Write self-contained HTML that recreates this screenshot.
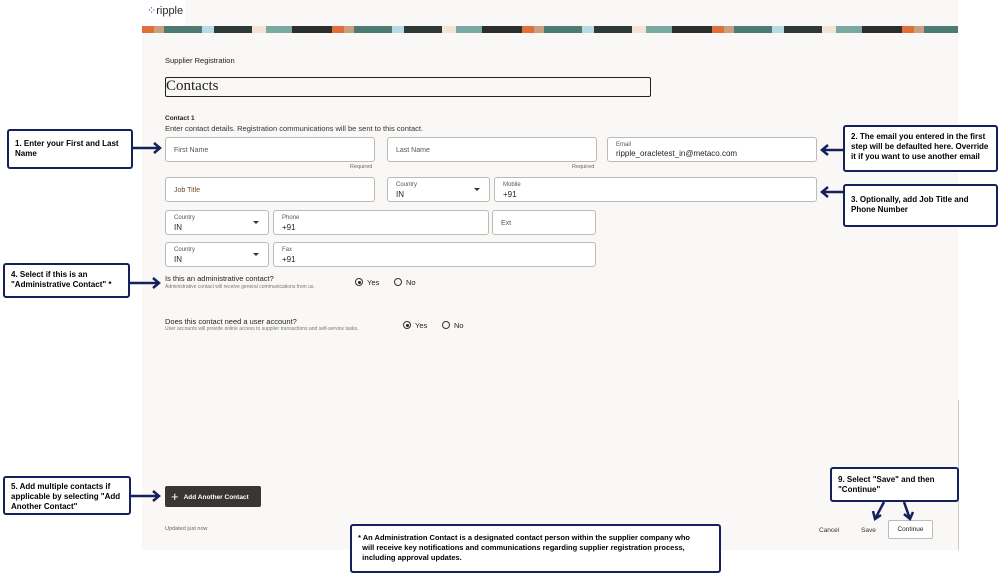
<!DOCTYPE html>
<html><head><meta charset="utf-8"><style>
*{margin:0;padding:0;box-sizing:border-box}
body{width:1000px;height:574px;background:#fff;position:relative;font-family:"Liberation Sans",sans-serif;overflow:hidden;color:#222}
.a{position:absolute}
.page{left:142px;top:0;width:816px;height:550px;background:#f9f8f6}
.banner{left:142px;top:26px;width:816px;height:7px;background:repeating-linear-gradient(90deg,#e0703a 0 12px,#c8a080 12px 22px,#4e7a74 22px 60px,#b8dbe3 60px 72px,#2d3a38 72px 110px,#f5e4d4 110px 124px,#7aa9a3 124px 150px,#2a2f2e 150px 190px)}
.logo{left:142px;top:0;width:43px;height:26px;background:#fff;font-size:11px;color:#2a2a2a;padding:4px 0 0 5px}
.f{position:absolute;background:#fff;border:1px solid #bdbab5;border-radius:3px}
.lbl{position:absolute;left:8px;font-size:6px;color:#555}
.val{position:absolute;left:8px;font-size:8px;color:#222}
.ph{position:absolute;left:8px;top:9px;font-size:7px;color:#555}
.dd{position:absolute;right:9px;top:10px;width:0;height:0;border-left:3px solid transparent;border-right:3px solid transparent;border-top:3px solid #333}
.co{position:absolute;border:2.5px solid #15215a;border-radius:3px;background:#fff;font-weight:bold;font-size:8px;line-height:10px;color:#000;padding:4px 6px}
.t{position:absolute;font-size:7px}
.rad{display:inline-block;width:8px;height:8px;border:1px solid #333;border-radius:50%;vertical-align:-1px;margin-right:4px;position:relative}
.rad.on::after{content:"";position:absolute;left:1.5px;top:1.5px;width:3px;height:3px;border-radius:50%;background:#222}
</style></head><body>
<div class="a page"></div>
<div class="a banner"></div>
<div class="a logo"><span style="color:#1a4f9c">⁘</span>ripple</div>
<div class="a" style="left:958px;top:400px;width:1px;height:150px;background:#ccc"></div>
<div class="t" style="left:165px;top:56px;font-size:7.5px">Supplier Registration</div>
<div class="a" style="left:165px;top:77px;width:486px;height:20px;border:1.5px solid #222;border-radius:2px;font-family:'Liberation Serif',serif;font-size:15px;padding-left:0;line-height:16px">Contacts</div>
<div class="t" style="left:165px;top:115px;font-weight:bold;font-size:6.5px">Contact 1</div>
<div class="t" style="left:165px;top:124px;font-size:7.5px;color:#333">Enter contact details. Registration communications will be sent to this contact.</div>

<div class="f" style="left:165px;top:137px;width:210px;height:25px"><div class="ph">First Name</div></div>
<div class="f" style="left:387px;top:137px;width:210px;height:25px"><div class="ph">Last Name</div></div>
<div class="f" style="left:607px;top:137px;width:210px;height:25px"><div class="lbl" style="top:4px">Email</div><div class="val" style="top:11px">ripple_oracletest_in@metaco.com</div></div>
<div class="t" style="left:350px;top:164px;font-size:5.5px;color:#666">Required</div>
<div class="t" style="left:572px;top:164px;font-size:5.5px;color:#666">Required</div>

<div class="f" style="left:165px;top:177px;width:210px;height:25px"><div class="ph" style="color:#6a4a2a">Job Title</div></div>
<div class="f" style="left:387px;top:177px;width:103px;height:25px"><div class="lbl" style="top:4px">Country</div><div class="val" style="top:12px">IN</div><div class="dd"></div></div>
<div class="f" style="left:494px;top:177px;width:323px;height:25px"><div class="lbl" style="top:4px">Mobile</div><div class="val" style="top:12px">+91</div></div>

<div class="f" style="left:165px;top:210px;width:104px;height:25px"><div class="lbl" style="top:4px">Country</div><div class="val" style="top:12px">IN</div><div class="dd"></div></div>
<div class="f" style="left:273px;top:210px;width:216px;height:25px"><div class="lbl" style="top:4px">Phone</div><div class="val" style="top:12px">+91</div></div>
<div class="f" style="left:492px;top:210px;width:104px;height:25px"><div class="ph">Ext</div></div>

<div class="f" style="left:165px;top:242px;width:104px;height:25px"><div class="lbl" style="top:4px">Country</div><div class="val" style="top:12px">IN</div><div class="dd"></div></div>
<div class="f" style="left:273px;top:242px;width:323px;height:25px"><div class="lbl" style="top:4px">Fax</div><div class="val" style="top:12px">+91</div></div>

<div class="t" style="left:165px;top:274px;font-size:7.5px;color:#222">Is this an administrative contact?</div>
<div class="t" style="left:165px;top:284px;font-size:5px;color:#777">Administrative contact will receive general communications from us.</div>
<div class="t" style="left:355px;top:278px;font-size:7.5px"><span class="rad on"></span>Yes</div>
<div class="t" style="left:394px;top:278px;font-size:7.5px"><span class="rad"></span>No</div>

<div class="t" style="left:165px;top:317px;font-size:7.5px;color:#222">Does this contact need a user account?</div>
<div class="t" style="left:165px;top:326px;font-size:5px;color:#777">User accounts will provide online access to supplier transactions and self-service tasks.</div>
<div class="t" style="left:403px;top:321px;font-size:7.5px"><span class="rad on"></span>Yes</div>
<div class="t" style="left:442px;top:321px;font-size:7.5px"><span class="rad"></span>No</div>

<div class="a" style="left:165px;top:486px;width:96px;height:21px;background:#3a3632;border-radius:2px;color:#fff;font-size:6.5px;font-weight:bold;line-height:21px;padding-left:6px"><span style="font-size:13px;vertical-align:-2px;margin-right:5px;font-weight:normal">+</span>Add Another Contact</div>
<div class="t" style="left:165px;top:526px;font-size:5.5px;color:#666">Updated just now</div>
<div class="t" style="left:819px;top:527px;font-size:6.5px;color:#333">Cancel</div>
<div class="t" style="left:861px;top:527px;font-size:6.5px;color:#333">Save</div>
<div class="a" style="left:888px;top:520px;width:45px;height:19px;border:1px solid #bbb;border-radius:2px;background:#fff;font-size:6.5px;text-align:center;line-height:17px">Continue</div>

<div class="co" style="left:7px;top:129px;width:126px;height:40px;padding-top:8px">1. Enter your First and Last Name</div>
<div class="co" style="left:3px;top:263px;width:127px;height:35px;padding-top:5px">4. Select if this is an "Administrative Contact" *</div>
<div class="co" style="left:3px;top:476px;width:128px;height:39px;padding-top:4px">5. Add multiple contacts if applicable by selecting "Add Another Contact"</div>
<div class="co" style="left:843px;top:125px;width:155px;height:47px;padding-top:5px">2. The email you entered in the first step will be defaulted here. Override it if you want to use another email</div>
<div class="co" style="left:843px;top:184px;width:155px;height:43px;padding-top:9px">3. Optionally, add Job Title and Phone Number</div>
<div class="co" style="left:830px;top:467px;width:129px;height:35px;padding-top:6px">9. Select "Save" and then "Continue"</div>
<div class="co" style="left:350px;top:524px;width:371px;height:49px;padding-top:7px;font-size:7.5px">* An Administration Contact is a designated contact person within the supplier company who<br>&nbsp;&nbsp;will receive key notifications and communications regarding supplier registration process,<br>&nbsp;&nbsp;including approval updates.</div>

<svg class="a" style="left:0;top:0" width="1000" height="574" fill="none" stroke="#15215a" stroke-width="2.5">
<path d="M133 148H160M154 143l6 5-6 5"/>
<path d="M129 283H159M153 278l6 5-6 5"/>
<path d="M131 496H159M153 491l6 5-6 5"/>
<path d="M843 150H822M828 145l-6 5 6 5"/>
<path d="M843 192H822M828 187l-6 5 6 5"/>
<path d="M884 502L875 519M873 511l2 8 6-4"/>
<path d="M904 502L910 519M904 514l6 5 3-7"/>
</svg>
</body></html>
